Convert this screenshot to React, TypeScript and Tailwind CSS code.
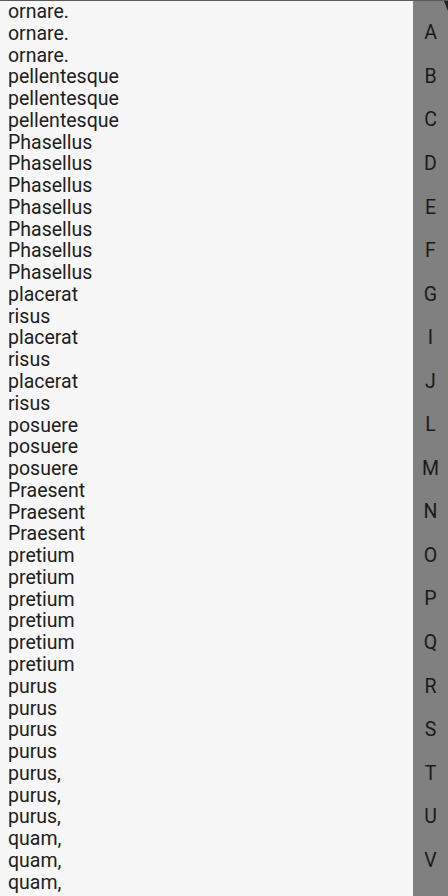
const rows = [
  'ornare.', 'ornare.', 'ornare.',
  'pellentesque', 'pellentesque', 'pellentesque',
  'Phasellus', 'Phasellus', 'Phasellus', 'Phasellus', 'Phasellus', 'Phasellus', 'Phasellus',
  'placerat', 'risus', 'placerat', 'risus', 'placerat', 'risus',
  'posuere', 'posuere', 'posuere',
  'Praesent', 'Praesent', 'Praesent',
  'pretium', 'pretium', 'pretium', 'pretium', 'pretium', 'pretium',
  'purus', 'purus', 'purus', 'purus',
  'purus,', 'purus,', 'purus,',
  'quam,', 'quam,', 'quam,',
];

const letters = ['A', 'B', 'C', 'D', 'E', 'F', 'G', 'I', 'J', 'L', 'M', 'N', 'O', 'P', 'Q', 'R', 'S', 'T', 'U', 'V'];

export default function App() {
  return (
    <div className="relative flex h-[896px] w-[448px] overflow-hidden border-t border-[#5a5a5a] bg-[#f7f7f7] font-['Roboto',sans-serif]">
      <ul className="flex-1 overflow-hidden">
        {rows.map((r, i) => (
          <li key={i} className="h-[21.78px] pl-2 text-[19.5px] leading-[21.78px] text-[#202020]">
            {r}
          </li>
        ))}
      </ul>
      <div className="flex w-[35px] flex-col bg-[#808080] pt-[10.2px]">
        {letters.map((l) => (
          <div key={l} className="flex h-[43.56px] items-center justify-center text-[19.5px] text-[#1a1a1a]">
            {l}
          </div>
        ))}
      </div>
      <div className="absolute right-0 top-0 h-0 w-0 border-l-[4px] border-t-[10px] border-l-transparent border-t-[#222]" />
    </div>
  );
}
